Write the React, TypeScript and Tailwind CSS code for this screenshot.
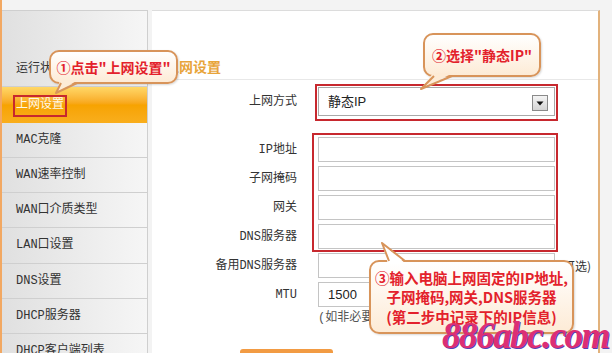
import React from "react";

const MENU = [
    "运行状态",
    "上网设置",
    "MAC克隆",
    "WAN速率控制",
    "WAN口介质类型",
    "LAN口设置",
    "DNS设置",
    "DHCP服务器",
    "DHCP客户端列表",
];

const FIELDS = [
    { label: "IP地址", value: "" },
    { label: "子网掩码", value: "" },
    { label: "网关", value: "" },
    { label: "DNS服务器", value: "" },
    { label: "备用DNS服务器", value: "", note: "(可选)" },
    { label: "MTU", value: "1500" },
];

const Callout = ({ className, children }: { className: string; children: React.ReactNode }) => (
    <div
        className={`absolute flex flex-col items-center justify-center rounded-[10px] border-2 border-[#d8945a] bg-linear-to-b from-white to-[#fdebd6] shadow-[1px_1px_2px_rgba(0,0,0,0.15)] text-[#e3212b] font-bold [font-family:'Noto_Sans_CJK_SC',sans-serif] ${className}`}
    >
        {children}
    </div>
);

export default function App() {
    return (
        <div className="relative flex w-[612px] h-[353px] overflow-hidden bg-[#f3f3f3] border-l-2 border-[#f2a862] [font-family:'Liberation_Mono','Noto_Sans_CJK_SC',monospace] text-[12px] text-[#333]">
            {/* Left menu */}
            <div className="mt-[10px] w-[146px] shrink-0 border-t border-r border-[#cfcfcf] bg-linear-to-r from-[#e0e0e0] to-[#f6f6f6]">
                <div className="h-[41px]" />
                {MENU.map((item, i) => (
                    <div
                        key={item}
                        className={
                            i === 1
                                ? "h-[35.25px] flex items-center pl-[14px] text-[#fff8e6] bg-linear-to-b from-[#ffd866] via-[#f7a300] to-[#f9ae1c]"
                                : "h-[35.25px] flex items-center pl-[14px] border-b border-[#cfcfcf]"
                        }
                    >
                        {item}
                    </div>
                ))}
            </div>

            <div className="w-[4px] shrink-0" />

            {/* Main panel */}
            <div className="mt-[10px] w-[448px] shrink-0 bg-white border-t border-[#dcdcdc] border-r-2 border-r-[#e2b27c]">
                <div className="h-[69px] flex items-end pb-[5px] pl-[13px] border-b border-[#e8e8e8]">
                    <span className="text-[14px] leading-[16px] font-bold text-[#e8a43a] [font-family:'Noto_Sans_CJK_SC',sans-serif]">
                        上网设置
                    </span>
                </div>

                <div className="mt-[7px] flex items-center h-[29px]">
                    <div className="w-[145px] text-right">上网方式</div>
                    <div className="relative ml-[21px] w-[237px] h-[29px] border border-[#a9a9a9] flex items-center pl-[9px] text-[13px] text-[#222] [font-family:'Liberation_Sans','Noto_Sans_CJK_SC',sans-serif]">
                        静态IP
                        <div className="absolute right-[6px] top-[7px] w-[16px] h-[16px] border border-[#8a8a8a] bg-linear-to-b from-[#f4f4f4] to-[#d4d4d4] flex items-center justify-center">
                            <svg width="8" height="5" viewBox="0 0 8 5">
                                <path d="M0.5 0.5 L7.5 0.5 L4 4.5 Z" fill="#111" />
                            </svg>
                        </div>
                    </div>
                </div>

                <div className="mt-[21px] flex flex-col gap-[4px]">
                    {FIELDS.map((f) => (
                        <div key={f.label} className="flex items-center h-[25px]">
                            <div className="w-[145px] text-right">{f.label}</div>
                            <div className="ml-[21px] w-[237px] h-[25px] shrink-0 border border-[#c4c4c4] flex items-center pl-[9px] text-[13px] text-[#222] [font-family:'Liberation_Sans',sans-serif]">
                                {f.value}
                            </div>
                            {f.note && (
                                <span className="ml-[4px] whitespace-nowrap text-[#333] [font-family:'Noto_Sans_CJK_SC',sans-serif]">
                                    {f.note}
                                </span>
                            )}
                        </div>
                    ))}
                </div>

                <div className="mt-[3px] pl-[166px] leading-[16px] text-[#555]">(如非必要，请勿修改)</div>

                <div className="mt-[23px] ml-[88px] w-[93px] h-[24px] rounded-[3px] bg-[#f29b43]" />
            </div>

            {/* Red annotation boxes */}
            <div className="absolute left-[11px] top-[95px] w-[54px] h-[22px] border-2 border-[#c7282e]" />
            <div className="absolute left-[313px] top-[84px] w-[243px] h-[37px] border-2 border-[#c7282e]" />
            <div className="absolute left-[310px] top-[133px] w-[246px] h-[119px] border-2 border-[#c7282e]" />

            {/* Callouts */}
            <Callout className="left-[47px] top-[50px] w-[129px] h-[34px] text-[14px] leading-[18px]">①点击"上网设置"</Callout>
            <Callout className="left-[421px] top-[33px] w-[118px] h-[44px] text-[14px] leading-[18px]">②选择"静态IP"</Callout>
            <Callout className="left-[367px] top-[260px] w-[205px] h-[74px] text-[14.5px] leading-[19.5px]">
                <span>③输入电脑上网固定的IP地址,</span>
                <span>子网掩码,网关,DNS服务器</span>
                <span>(第二步中记录下的IP信息)</span>
            </Callout>

            {/* Callout tails */}
            <svg className="absolute left-0 top-0 pointer-events-none" width="612" height="353" viewBox="0 0 612 353">
                <polygon points="58,80 76,80 54,93" fill="#fdebd6" />
                <polyline points="59,83 54,93 75,83" fill="none" stroke="#d8945a" strokeWidth="2" strokeLinejoin="round" />
                <polygon points="431,73 451,73 419,89" fill="#fdebd6" />
                <polyline points="432,76 419,89 450,76" fill="none" stroke="#d8945a" strokeWidth="2" strokeLinejoin="round" />
                <polygon points="386,264 404,264 380,243" fill="#ffffff" />
                <polyline points="387,261 380,243 403,261" fill="none" stroke="#d8945a" strokeWidth="2" strokeLinejoin="round" />
            </svg>

            {/* Watermark */}
            <div className="absolute left-[440px] top-[317px] text-[37px] leading-none italic font-bold tracking-[-1.5px] text-[#dc2f74] [font-family:'Liberation_Serif',serif] [text-shadow:1px_1px_0_#5b3fb5]">
                886abc.com
            </div>
        </div>
    );
}
